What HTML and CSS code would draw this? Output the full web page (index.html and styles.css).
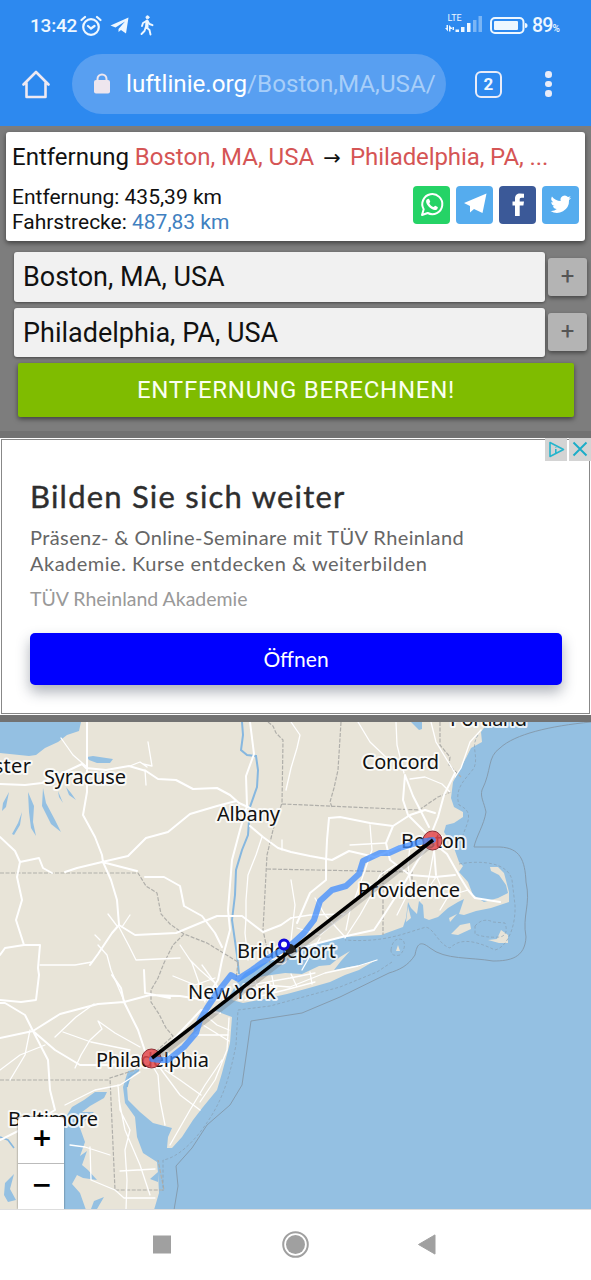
FILE: index.html
```html
<!DOCTYPE html>
<html lang="de">
<head>
<meta charset="utf-8">
<title>Entfernung Boston – Philadelphia</title>
<link rel="stylesheet" href="styles.css">
</head>
<body>
<div class="phone">
  <header class="chrome">
    <div class="status">
      <span class="clock">13:42</span>
      <svg class="ic-alarm" width="22" height="22" viewBox="0 0 22 22" fill="none" stroke="#eef7ff" stroke-width="2.200" stroke-linecap="round"><circle cx="11" cy="12" r="7.800"/><path d="M1.500 5 5 2M20.500 5 17 2M8 11l3 2.500 3.500-2.500"/></svg>
      <svg class="ic-tg" width="19" height="17" viewBox="0 0 19 17" fill="#eef7ff"><path d="M18.500.5.500 8.500l5 2L15 4.500 8.500 12v3l2.500-2 5 3.500z"/></svg>
      <svg class="ic-walk" width="14" height="21" viewBox="0 0 14 21" fill="none" stroke="#eef7ff" stroke-width="1.900" stroke-linecap="round" stroke-linejoin="round"><circle cx="7.500" cy="2.300" r="1.500" fill="#eef7ff" stroke-width="1"/><path d="M6.500 6 3 8 2 11M7 6l-1 6 3.500 3 1 4.500M5.800 12 4.500 16l-3 3M7.500 6l2 3 3 1.200"/><path d="M7 6v6" stroke-width="3"/></svg>
      <svg class="ic-signal" width="38" height="20" viewBox="0 0 38 20"><text x="2.500" y="7" class="lte">LTE</text><g fill="#eef7ff"><path d="M0 14h1.500v-3H3v6.500zM4 11l3 3v1H5.500v2.500H4zM7.500 13H9v3H7.500zM10.500 15.500H14V18h-3.500zM16 13h3.500v5H16zM22 9h3.500v9H22z"/><path opacity=".4" d="M28 6h3.500v12H28zM33.500 2H37v16h-3.500z"/></g></svg>
      <svg class="ic-batt" width="38" height="18" viewBox="0 0 38 18"><rect x="1" y="1" width="32.500" height="15" rx="4" fill="none" stroke="#eef7ff" stroke-width="2"/><rect x="4" y="4" width="24" height="9" rx="1" fill="#eef7ff"/><path d="M35 6q2.500 0 2.500 2.500T35 11z" fill="#eef7ff"/></svg>
      <span class="pct">89<small>%</small></span>
    </div>
    <div class="toolbar">
      <svg class="ic-home" width="28" height="29" viewBox="0 0 28 29" fill="none" stroke="#eee9f2" stroke-width="2.600" stroke-linejoin="round" stroke-linecap="round"><path d="M1.500 14.500 14 2l12.500 12.500M4.500 13v14h19V13"/></svg>
      <div class="url">
        <svg width="18" height="22" viewBox="0 0 18 22"><path d="M4.500 9V6a4.500 4.500 0 0 1 9 0v3" fill="none" stroke="#eee6ee" stroke-width="2"/><rect x="1" y="7" width="16" height="13.500" rx="2" fill="#eee6ee"/></svg>
        <span class="address">luftlinie.org<i>/Boston,MA,USA/</i></span>
      </div>
      <span class="tabs">2</span>
      <span class="dots"><b></b><b></b><b></b></span>
    </div>
  </header>

  <main>
    <section class="panel">
      <article class="card">
        <h1>Entfernung <em>Boston, MA, USA</em><span class="arrow">→</span><em>Philadelphia, PA, ...</em></h1>
        <div class="row">
          <p>Entfernung: 435,39 km<br>Fahrstrecke: <a>487,83 km</a></p>
          <div class="share">
            <span class="wa"><svg width="37" height="38" viewBox="0 0 37 38"><path d="M9 29l1.700-5.800A10 10 0 1 1 14.700 27z" fill="none" stroke="#fff" stroke-width="2" stroke-linejoin="round"/><path d="M14.200 13.300c1-1 1.800-.6 2.100.3l.9 2c.2.600-1 1.500-.8 1.900 1 1.700 2.300 2.900 4 3.600.6.200 1.300-1.500 1.900-1.300l2.300 1.100c.7.400-.2 2.300-1.100 2.800-3.800 2-11-4.700-10.400-8.600.1-.7.400-1.200 1.100-1.800z" fill="#fff"/></svg></span>
            <span class="tg"><svg width="37" height="38" viewBox="0 0 37 38" fill="#fff"><path d="M30.500 7.500 8 17l6 3v6.500l4-3.500 8.500 4z"/></svg></span>
            <span class="fb"><svg width="37" height="38" viewBox="0 0 37 38" fill="#fff"><path d="M16 30V19.500h-2.500v-4H16V13c0-4 2-5.500 5-5.500l4 .2v4h-2.500c-1.500 0-1.800.8-1.800 2v1.800h4.300l-.6 4h-3.700V30z"/></svg></span>
            <span class="tw"><svg width="37" height="38" viewBox="0 0 24 24" preserveAspectRatio="none"><g transform="translate(5.500 4.800) scale(.56)"><path fill="#fff" d="M24 4.600a10 10 0 0 1-2.800.8 5 5 0 0 0 2.100-2.700c-1 .6-2 1-3.100 1.200a4.900 4.900 0 0 0-8.400 4.500A14 14 0 0 1 1.700 3.200a4.900 4.900 0 0 0 1.500 6.500c-.8 0-1.600-.2-2.200-.6a4.900 4.900 0 0 0 3.900 4.900c-.7.200-1.500.2-2.200.1a4.900 4.900 0 0 0 4.600 3.400A10 10 0 0 1 0 19.500a14 14 0 0 0 21.500-12.400A10 10 0 0 0 24 4.600z"/></g></svg></span>
          </div>
        </div>
      </article>
      <div class="form">
        <div class="field"><div class="input">Boston, MA, USA</div><div class="add">+</div></div>
        <div class="field"><div class="input">Philadelphia, PA, USA</div><div class="add">+</div></div>
        <div class="submit">ENTFERNUNG BERECHNEN!</div>
      </div>
    </section>

    <section class="ad">
      <div class="adbox">
        <h2>Bilden Sie sich weiter</h2>
        <p class="copy"><span class="l1">Präsenz- &amp; Online-Seminare mit TÜV Rheinland</span><br><span class="l2">Akademie. Kurse entdecken &amp; weiterbilden</span></p>
        <p class="brand">TÜV Rheinland Akademie</p>
        <div class="open">Öffnen</div>
      </div>
      <div class="choices">
        <span><svg width="22" height="22" viewBox="0 0 22 22" fill="none" stroke="#25b5cd" stroke-width="1.600" stroke-linejoin="round"><path d="M5 4.500 18.500 11.500 5 18.500zM10.800 7.800v1.600M10.800 11v4.500"/></svg></span>
        <span><svg width="22" height="22" viewBox="0 0 22 22" fill="none" stroke="#1badc8" stroke-width="1.900"><path d="m4.500 4.500 13 13m0-13-13 13"/></svg></span>
      </div>
    </section>

    <section class="map">
      <svg width="591" height="488" viewBox="0 722 591 488">
        <rect y="722" width="591" height="488" fill="#94c0e2"/>
        <path class="land" d="M0 722H488L481 732 482 742 471 748 466 758 458 773 453 782 451 798 454 807 463 812 463 817 454 823 446 825 444 832 454 848 459 862 463 866 459 872 468 882 473 895 484 902 498 898 508 893 506 885 499 875 491 871 490 867 498 867 504 873 509 892 509 902 491 908 476 911 464 915 459 914 464 899 458 902 448 908 438 917 429 920 424 918 423 905 419 901 417 914 411 908 408 902 406 918 403 927 381 935 341 937 324 942 301 946 284 956 262 964 245 973 236 984 232 992 224 1003 213 1010 232 1017 230 1043 222 1073 217 1090 203 1107 193 1120 182 1137 172 1148 167 1148 168 1137 172 1128 153 1123 140 1112 128 1100 127 1087 133 1073 140 1069 128 1071 123 1087 125 1103 135 1117 137 1137 143 1153 157 1162 158 1173 159 1193 154 1210H0z"/>
        <!-- Long Island, islands off the Cape -->
        <path class="land" d="M232 1000 238 990 249 981 264 976 285 973 302 974 319 966 330 965 340 957 350 951 341 961 334 970 349 967 363 965 376 960 359 970 345 975 330 982 309 988 287 994 264 999 243 1003zM451 934 460 925 470 923 471 929 458 935zM488 940 497 939 501 930 508 935 508 943 499 943zM396 951 398 945 400 951zM449 918 457 914 450 922zM408 906 411 918 406 922z"/>
        <g class="water">
          <path d="M0 722H81L79 731 67 735 58 742 45 748 36 755 29 756 0 753zM87 757 93 756 113 759 110 763 97 763 89 760zM411 722H422V729L419 730z"/>
          <path d="M3 803 9 792 6 807 2 811zM12 834 18 823 22 812 20 825 14 835zM28 792 34 806 33 822 36 836 31 828 29 812zM43 788 46 803 55 820 61 832 51 824 42 806zM58 791 63 803 59 797zM66 787 71 793 76 800 69 795z"/>
          <path d="M72 1107 84 1100 95 1092 107 1092 104 1098 90 1106 82 1112 94 1112 87 1118 80 1128 85 1142 80 1156 87 1151 82 1165 88 1170 97 1180 83 1178 77 1175 72 1184 80 1193 86 1210H64V1120zM94 1201 104 1197 97 1209H91zM150 1179 158 1172V1182zM5 1183 14 1174 10 1189 16 1200 8 1202 4 1195z"/>
        </g>
        <path class="river" d="M242 722 243 735 241 750 247 755 256 756 258 770 257 787 250 807 248 835 242 850 236 870 235 895 232 920 237 955 239 974"/>
        <path class="river thin" d="M127 1087 129 1077 139 1070M0 1137 8 1140 14 1148"/>
        <path class="state" d="M0 873H138L146 886 157 893 161 914 170 924 184 934 207 943 238 962M184 934 173 945 164 963 158 978 151 990 151 1002 159 1014 166 1028 173 1036 151 1056 135 1070 110 1078 115 1190H164L158 1160M0 1080H109M268 722 273 726 276 733 283 740 282 803 273 830 267 855 263 930 270 963M282 804 419 810 438 797 451 792M341 722 338 770 334 788 330 802 332 807M440 722 440 745 450 757 449 765 461 777M267 869 412 872V882M383 872V935M238 962 236 980"/>
        <path class="sea" d="M591 722C550 726 515 734 500 748 487 757 492 770 482 790C480 797 484 802 486 812 484 825 476 837 474 847H500C520 848 525 860 526 882 531 905 522 915 526 937 525 958 510 961 493 961 470 957 445 960 430 948 420 940 417 944 415 955 408 966 399 970 389 973L340 997 302 1013 251 1021 247 1050 242 1085 230 1105 207 1125 192 1148 176 1166 178 1186 174 1210"/>
        <path class="sea dash" d="M478 735C470 747 479 755 474 768 465 780 454 788 459 805 475 812 467 823 463 835M459 864C480 860 508 862 512 880L515 905C516 925 508 947 495 950 474 940 460 938 450 948 438 945 432 923 423 928 405 933 384 943 345 940M392 962 377 972 340 987 270 1006 238 1010L236 1045C231 1070 225 1095 210 1118 195 1142 177 1158 163 1160L163 1191M391 950q2-14 12-10 4 7-3 15-9 2-9-5M475 926q8-9 18-4l12 1q4 12-5 14-15 1-25-3z"/>
        <g class="road main">
          <path d="M0 784 25 785 42 783 82 764 86 768 106 770 129 766 146 771 158 779 176 780 193 789 217 788 230 795 239 803 250 808M87 722 87 767 87 792 83 815 95 837 102 855 103 862 111 880 117 900 119 925 112 933 98 954 90 965M102 862 128 856 146 838 168 832 190 814 217 806 236 801M102 862 77 868 65 872M102 862 137 871M145 877 164 877 180 886 184 906 202 916 215 933 222 947"/>
          <path d="M250 722 254 754 246 776 247 806 240 830 232 860 228 910 230 930 222 960 218 980 205 1000M250 826 263 837 278 848 291 852 310 856 332 860 349 851 375 857 404 845 430 841"/>
          <path d="M0 837 15 851 20 862 39 858 43 868 52 873M20 862 17 877 22 900 16 920 24 945 5 948 0 955M24 945 40 945 38 968 39 975 36 1000 21 1002 0 1000M119 925 135 935 176 933 217 916 242 916 263 932 281 925 291 918"/>
          <path d="M329 818 327 840 326 862 326 880 310 893 297 923M405 775 413 796 429 827M405 775 403 800 408 815 430 837M455 773 444 795 438 817 430 837 434 850 436 875M431 841 418 860 405 882 384 915 374 930 342 937 315 944 284 954"/>
          <path d="M431 841 447 854 460 877 468 890 475 898 500 902M393 826 386 843 390 860 410 875 435 877 455 875M393 826 370 823 340 817 329 818M393 826 410 815 425 810 435 813"/>
          <path d="M33 1031 60 1014 98 1004 124 1002 150 995 180 996 205 1000M0 1038 33 1031 55 1050 80 1065 110 1065 145 1062 170 1043 201 1010 220 1013M33 1031 25 1015 5 1003 0 1003M33 1031 48 1060 50 1090 55 1110 30 1125 0 1140M112 975 121 988 124 1002 138 1030 146 1054M144 970 145 993 170 998"/>
        </g>
        <g class="road">
          <path d="M148 742 152 766 143 764M146 785 145 770M61 738 73 755 87 767M130 766 140 762 147 767M262 837 256 855 248 875 246 900 246 918 245 933 248 960M282 850 282 840M291 722 300 735 297 748 291 768 286 790M396 722 397 745 404 773M358 722 370 742 390 761M481 730 470 742 461 768 455 777M431 722 436 742 455 773M297 928 320 935 350 910 346 930M410 779 425 777 442 784 450 792"/>
          <path d="M98 945 107 955 111 970 125 1003M119 927 129 946 136 960 180 958M92 962 75 965 40 965M100 940 95 935M122 927 130 915M117 926 108 914M180 945 192 963 198 980 205 1002M190 960 200 970 215 983M173 976 195 985 215 978M202 965 220 990"/>
          <path d="M98 1021 102 1029 90 1040 81 1055 75 1068M98 1021 115 1033 140 1047M63 1032 91 1042 130 1050M55 1037 76 1017 94 1004M30 1030 25 1055 10 1080M0 1070 20 1055 45 1045M146 1056 160 1068 180 1095 200 1110M165 1070 180 1080 201 1095M205 1015 217 1025 229 1030M203 1025 229 1041M195 1035 228 1035M146 1055 158 1075 160 1100 165 1125"/>
          <path d="M118 1085 120 1110 130 1130 125 1150 127 1180 126 1210M119 1100 125 1130 140 1165 150 1195M70 1145 85 1147 110 1155M90 1147 91 1180 115 1190 124 1198 155 1198M120 1171 155 1169M65 1105 95 1090 120 1085 140 1072M229 1018 227 1050 215 1080 200 1102M222 1060 205 1085 190 1110 170 1145"/>
          <path d="M240 995 265 985 290 987 325 973 358 966 377 960M245 1000 285 990 315 982M250 985 290 978 315 973M255 980 260 995M272 976 275 992M291 974 297 987M310 972 312 984M280 955 315 944M302 970 320 938M345 938 360 915 374 890M410 845 408 865 411 887 397 915M434 850 430 872 425 895M436 877 420 900M437 877 445 897 468 890M452 890 440 910M370 825 372 850 365 870 355 898M386 843 350 845M395 865 380 875 373 890M291 918 310 915 345 914M315 898 325 915 345 937M291 880 295 905 291 940"/>
        </g>
        <g class="labels">
          <text x="-18" y="773" textLength="49">ester</text>
          <text x="44" y="784" textLength="82">Syracuse</text>
          <text x="217" y="821" textLength="63">Albany</text>
          <text x="362" y="769" textLength="77">Concord</text>
          <text x="450" y="726" textLength="77">Portland</text>
          <text x="401" y="848" textLength="65">Boston</text>
          <text x="358" y="897" textLength="102">Providence</text>
          <text x="237" y="958" textLength="99">Bridgeport</text>
          <text x="188" y="999" textLength="88">New York</text>
          <text x="96" y="1067" textLength="113">Philadelphia</text>
          <text x="8" y="1125.500" textLength="90">Baltimore</text>
        </g>
        <g stroke="#8b2e35" fill="#e2474b" fill-opacity=".85"><circle cx="432.500" cy="840.500" r="9.500"/><circle cx="151.500" cy="1058.500" r="9.500"/></g>
        <path d="M434 843 154 1061" stroke="#777" stroke-opacity=".35" stroke-width="5"/>
        <path class="route" d="M433 840 420 842 400 848 389 853 380 853 363 861 359 874 346 886 332 890 320 901 314 920 304 933 291 945 270 957 252 970 238 979 231 975 217 993 207 1008 200 1020 196 1033 184 1047 168 1060 160 1060 152 1059"/>
        <path d="M433 840 152 1058" stroke="#000" stroke-width="3.500"/>
        <circle cx="290" cy="949" r="5" fill="#222"/><circle cx="284" cy="944.500" r="4.500" fill="#fff" stroke="#1308dc" stroke-width="3"/>
      </svg>
      <div class="zoomctl"><span>+</span><span>−</span></div>
    </section>
  </main>

  <nav class="nav">
    <svg width="591" height="70" viewBox="0 0 591 70" fill="#a0a0a0"><rect x="153" y="25.500" width="18" height="18"/><circle cx="295.500" cy="34.500" r="12.300" fill="none" stroke="#a0a0a0" stroke-width="2"/><circle cx="295.500" cy="34.500" r="9.500"/><path d="M418.500 34.500 435 24.900v19.200z" stroke="#a0a0a0" stroke-linejoin="round"/></svg>
  </nav>
</div>
</body>
</html>
```
FILE: styles.css
```css
* { box-sizing: border-box; margin: 0; padding: 0; }
body { font-family: Roboto, "Liberation Sans", sans-serif; background: #fff; }
.phone { width: 591px; height: 1280px; display: flex; flex-direction: column; overflow: hidden; }

.chrome { height: 126px; background: #2d89ef; color: #eef7ff; flex: none; }
.status { height: 54px; padding: 0 30px 3px; display: flex; align-items: center; }
.clock { font-size: 19px; width: 50px; letter-spacing: -.2px; font-weight: 500; }
.ic-tg { margin-left: 8px; }
.ic-walk { margin-left: 11px; }
.ic-signal { margin-left: auto; margin-top: -3px; }
.lte { font-size: 9px; fill: #eef7ff; }
.ic-batt { margin-left: 7px; }
.pct { font-size: 19.500px; margin-left: 4px; width: 29px; white-space: nowrap; letter-spacing: -.8px; font-weight: 500; }
.pct small { font-size: 10px; }
.toolbar { height: 60px; display: flex; align-items: center; padding-left: 22px; }
.url { margin-left: 22px; width: 374px; height: 60px; border-radius: 30px; background: #589ff1; display: flex; align-items: center; padding-left: 21px; }
.address { margin-left: 15px; font-size: 24.200px; white-space: nowrap; color: #fff; }
.address i { font-style: normal; color: #a7cef9; }
.tabs { margin-left: 29px; width: 27px; height: 27px; border: 2.500px solid #e9ecf8; border-radius: 6px; font-size: 17px; font-weight: 700; line-height: 23px; text-align: center; }
.dots { margin-left: 43px; display: flex; flex-direction: column; gap: 3px; }
.dots b { width: 6.500px; height: 6.500px; border-radius: 50%; background: #e9ecf8; }

.panel { height: 312px; background: #7d7d7d; padding: 6px 6px 0; border-bottom: 7px solid #727272; }
.card { width: 579px; height: 109px; background: #fff; border-radius: 3px; padding: 10px 6px; box-shadow: 0 2px 5px rgba(0,0,0,.5); }
h1 { font-size: 24px; font-weight: 400; line-height: 30px; white-space: nowrap; color: #111; }
h1 em { font-style: normal; color: #d55555; }
h1 em:last-child { letter-spacing: -.1px; }
.arrow { display: inline-block; width: 36px; text-align: center; font-family: "DejaVu Sans", sans-serif; font-size: 21px; line-height: 20px; }
.row { display: flex; justify-content: space-between; }
.row p { font-size: 21px; line-height: 25px; margin-top: 13px; color: #111; }
.row a { color: #4080c0; }
.share { display: flex; gap: 6px; margin-top: 14px; }
.share span { width: 37px; height: 38px; border-radius: 4px; }
.share svg { display: block; }
.wa { background: #25d366; }
.tg, .tw { background: #55acee; }
.fb { background: #3b5998; }
.form { padding: 11px 0 0 8px; display: flex; flex-direction: column; gap: 6px; }
.field { display: flex; align-items: center; gap: 3px; height: 49.500px; }
.input { flex: none; width: 531px; height: 49.500px; background: #f1f1f1; border-radius: 3px; font-size: 27px; line-height: 50px; padding-left: 9px; box-shadow: 0 1px 3px rgba(0,0,0,.45); color: #111; }
.add { flex: none; width: 39px; height: 38px; background: #b4b4b4; border-radius: 3px; color: #555; font-size: 24px; line-height: 37px; text-align: center; box-shadow: 0 2px 4px rgba(0,0,0,.45); }
.submit { margin-left: 4px; width: 556px; height: 54px; border-radius: 2px; background: #7fbc00; color: #fafff0; font-size: 24px; letter-spacing: .75px; line-height: 54px; text-align: center; box-shadow: 0 2px 5px rgba(0,0,0,.5); }

.ad { position: relative; height: 284px; padding: 1px 1px 1px; border-bottom: 7px solid #727272; font-family: Lato, "Open Sans", sans-serif; }
.adbox { height: 275px; border: 1px solid #888; padding: 37px 27px 0 28px; }
.ad h2 { font-size: 31px; font-weight: 400; line-height: 38px; color: #2e2e2e; white-space: nowrap; letter-spacing: 1.220px; -webkit-text-stroke: .4px #2e2e2e; }
.copy { margin-top: 9px; font-size: 20px; line-height: 26px; color: #666; white-space: nowrap; letter-spacing: .4px; }
.l2 { letter-spacing: .5px; }
.brand { margin-top: 10px; font-size: 19.500px; line-height: 26px; color: #999; }
.open { margin-top: 21px; width: 532px; height: 52px; border-radius: 5px; background: #00f; color: #fff; font-size: 21px; line-height: 51px; text-align: center; box-shadow: 0 7px 14px rgba(50,60,80,.4); }
.choices { position: absolute; top: 0; right: 0; display: flex; gap: 2px; }
.choices span { width: 22px; height: 23px; background: #d4d4d4; }

.map { position: relative; height: 487px; overflow: hidden; }
.map > svg { display: block; }
.land { fill: #e8e4d8; }
.water { fill: #94c0e2; }
.river { fill: none; stroke: #86b7df; stroke-width: 2; }
.thin { stroke-width: 1.600; }
.state { fill: none; stroke: #b0afaa; stroke-width: 1.200; stroke-dasharray: 4 1.500; }
.sea { fill: none; stroke: #859caf; stroke-width: 1; }
.dash { stroke-dasharray: 3 2; opacity: .65; }
.road { fill: none; stroke: #fff; stroke-width: 1.300; stroke-linejoin: round; stroke-linecap: round; }
.main { stroke-width: 2; }
.labels { font: 20px "Noto Sans", "Open Sans", sans-serif; fill: #111; stroke: #fff; stroke-opacity: .8; stroke-width: 4px; stroke-linejoin: round; paint-order: stroke; }
.route { fill: none; stroke: #3f8cff; stroke-opacity: .75; stroke-width: 6; stroke-linejoin: round; stroke-linecap: round; }
.zoomctl { position: absolute; left: 18px; top: 395px; width: 46px; height: 92px; background: #fff; border-radius: 4px 4px 0 0; box-shadow: 0 0 2px rgba(0,0,0,.6); }
.zoomctl span { display: block; height: 46px; font: 700 25px/41px "DejaVu Sans", sans-serif; text-align: center; padding-left: 2px; }
.zoomctl span + span { border-top: 1px solid #bbb; }
.nav { height: 71px; background: #fff; border-top: 1px solid #ddd; }
.nav svg { display: block; }
```
